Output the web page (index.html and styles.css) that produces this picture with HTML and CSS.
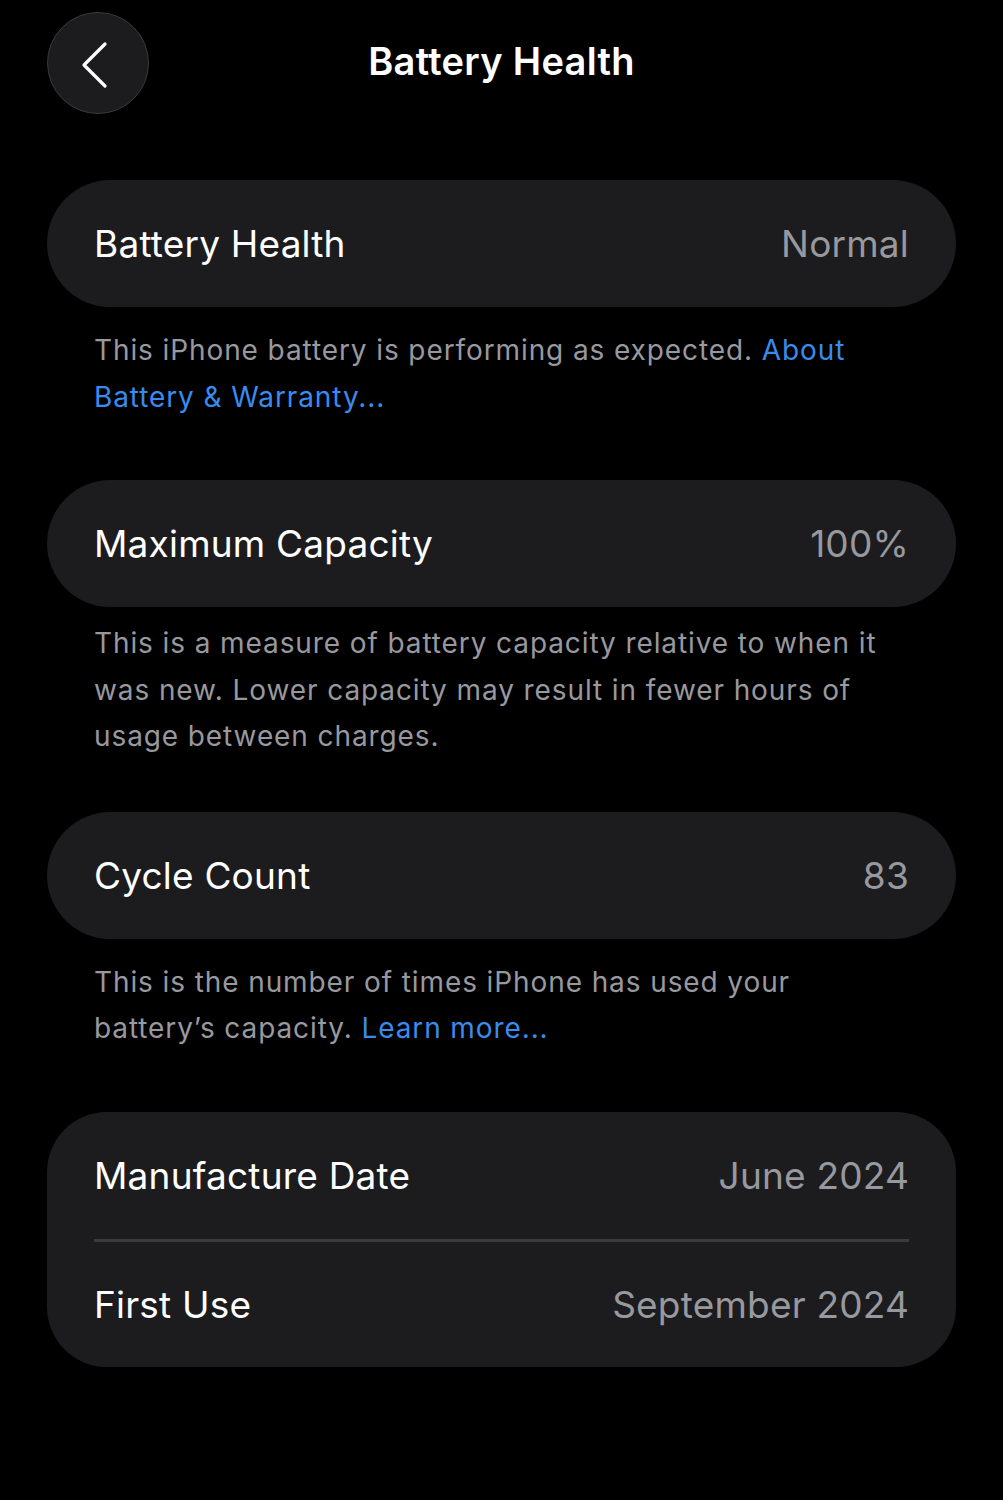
FILE: index.html
```html
<!DOCTYPE html>
<html lang="en">
 <head>
    <meta charset="utf-8">
    <title>Battery Health</title>
    <meta name="viewport" content="width=device-width, initial-scale=1.0">
    <link rel="stylesheet" href="styles.css">
 </head>

 <body>
    <div id="nav">
        <a class="back" href="">
            <svg width="102" height="102" viewBox="0 0 102 102">
                <path d="M58 32 L37 53 L58 74" fill="none" stroke="#fff" stroke-width="3.2" stroke-linecap="round" stroke-linejoin="round"/>
            </svg>
        </a>
        <h1 class="title">Battery Health</h1>
    </div>

    <div class="section first">
        <div class="card">
            <div class="row"><span class="label">Battery Health</span><span class="value">Normal</span></div>
        </div>
        <p class="footer">This iPhone battery is performing as expected. <a href="">About Battery &amp; Warranty...</a></p>
    </div>

    <div class="section">
        <div class="card">
            <div class="row"><span class="label">Maximum Capacity</span><span class="value">100%</span></div>
        </div>
        <p class="footer tight">This is a measure of battery capacity relative to when it was new. Lower capacity may result in fewer hours of usage between charges.</p>
    </div>

    <div class="section close">
        <div class="card">
            <div class="row"><span class="label">Cycle Count</span><span class="value">83</span></div>
        </div>
        <p class="footer">This is the number of times iPhone has used your battery’s capacity. <a href="">Learn more...</a></p>
    </div>

    <div class="section">
        <div class="card group">
            <div class="row"><span class="label">Manufacture Date</span><span class="value">June 2024</span></div>
            <div class="row"><span class="label">First Use</span><span class="value">September 2024</span></div>
        </div>
    </div>
 </body>
</html>
```

FILE: styles.css
```css
html, body {
    margin: 0;
    padding: 0;
}

body {
    background-color: #000;
    color: #fff;
    font-family: Inter, "Noto Sans", sans-serif;
    width: 1003px;
    min-height: 1500px;
}

a {
    text-decoration: none;
    color: #3a8bee;
}

/* top bar */

#nav {
    position: relative;
    height: 126px;
    display: flex;
    align-items: center;
    justify-content: center;
}

.back {
    position: absolute;
    left: 47px;
    top: 12px;
    width: 100px;
    height: 100px;
    border-radius: 50%;
    background: #1c1c1e;
    border: 1px solid #3a3a3c;
    display: flex;
    align-items: center;
    justify-content: center;
}

.back svg {
    flex: none;
}

.title {
    margin: 0 0 4px 0;
    font-size: 38px;
    font-weight: 600;
    letter-spacing: 0.3px;
}

/* sections */

.section {
    margin: 60px 47px 0 47px;
}

.section.first {
    margin-top: 54px;
}

.section.close {
    margin-top: 52px;
}

.card {
    background: #1c1c1e;
    border-radius: 64px;
    padding: 0 47px;
}

.card.group {
    border-radius: 60px;
}

.row {
    height: 127px;
    display: flex;
    align-items: center;
    justify-content: space-between;
    font-size: 37px;
    letter-spacing: 0.2px;
}

.group .row + .row {
    border-top: 3px solid #3a3a3c;
    height: 125px;
}

.group .row:first-child {
    height: 127px;
}

.label {
    color: #fff;
}

.value {
    color: #98989f;
}

.footer {
    margin: 0;
    padding: 20px 60px 0 47px;
    font-size: 28px;
    line-height: 46.5px;
    letter-spacing: 0.9px;
    color: #98989f;
}

.footer.tight {
    padding-top: 13px;
}
```
